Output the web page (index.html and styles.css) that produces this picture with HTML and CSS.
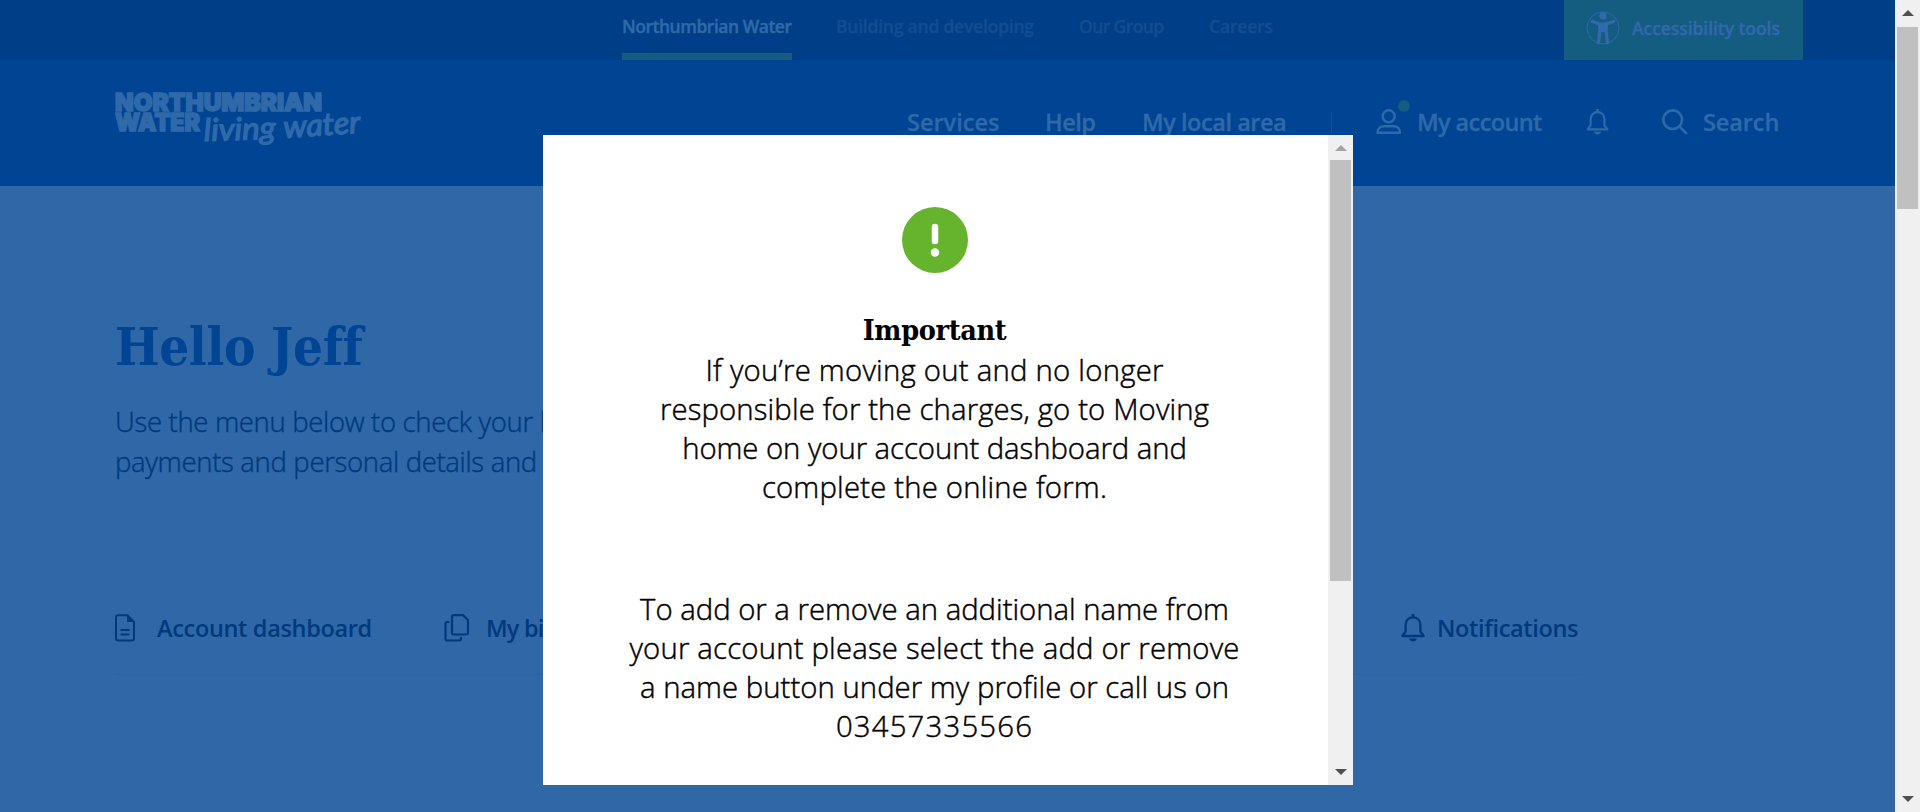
FILE: index.html
```
<!DOCTYPE html>
<html lang="en">
<head>
<meta charset="utf-8">
<title>My account | Northumbrian Water</title>
<link rel="stylesheet" href="styles.css">
</head>
<body>
<div class="window">
  <div class="page">
    <div class="topbar">
      <nav class="sites">
        <a class="site active s1">Northumbrian Water</a>
        <a class="site s2">Building and developing</a>
        <a class="site s3">Our Group</a>
        <a class="site s4">Careers</a>
      </nav>
      <a class="access">
        <svg width="34" height="34" viewBox="0 0 34 34"><circle cx="17" cy="17" r="16" fill="none" stroke="currentColor"/><circle cx="17" cy="5" r="3.6" fill="currentColor"/><path d="M6.200 10.500 13.500 13 14 19 12.500 32M27.800 10.500 20.500 13 20 19 21.500 32" fill="none" stroke="currentColor" stroke-width="3.200" stroke-linecap="round"/><path d="M12 11.500h10l-1.500 9.500h-7z" fill="currentColor"/></svg>
        <span>Accessibility tools</span>
      </a>
    </div>
    <header class="header">
      <svg class="logo" width="250" height="76" viewBox="0 -6 250 76">
        <text class="brand" x="0" y="21" textLength="207" lengthAdjust="spacingAndGlyphs">NORTHUMBRIAN</text>
        <text class="brand" x="0" y="40.500" textLength="85" lengthAdjust="spacingAndGlyphs">WATER</text>
        <text class="script" x="89" y="51" textLength="72" lengthAdjust="spacingAndGlyphs" transform="rotate(-2 89 51)">living</text>
        <text class="script" x="169" y="48" textLength="77" lengthAdjust="spacingAndGlyphs" transform="rotate(-4 169 48)">water</text>
      </svg>
      <nav class="mainnav">
        <a class="n1">Services</a><a class="n2">Help</a><a class="n3">My local area</a>
        <i class="divider"></i>
        <span class="person">
          <svg width="26" height="26" viewBox="0 0 26 26" fill="none" stroke="currentColor" stroke-width="2.500"><circle cx="12.700" cy="7.300" r="6"/><path d="M1.500 23.800C1.500 19 5 17.200 8 17.200h9.500c3 0 6.500 1.800 6.500 6.600z" stroke-linejoin="round"/></svg>
          <b class="dot"></b>
        </span>
        <a class="n4">My account</a>
        <svg class="bell" width="23" height="26" viewBox="0 0 24 28"><use href="#bell"/></svg>
        <svg width="26" height="26" viewBox="0 0 26 26" fill="none" stroke="currentColor" stroke-width="2.600"><circle cx="10.700" cy="10.700" r="9.300"/><path d="m17.300 17.300 7.500 7.500"/></svg>
        <a class="n5">Search</a>
      </nav>
    </header>
    <main class="main">
      <h1>Hello Jeff</h1>
      <p class="intro">Use the menu below to check your bills,<br>payments and personal details and</p>
      <div class="tabs">
        <svg width="20" height="28" viewBox="0 0 20 28"><path d="M3 1.200h9.500L19 8v16.500a2 2 0 0 1-2 2H3a2 2 0 0 1-2-2V3.200a2 2 0 0 1 2-2zM5.500 16h9M5.500 20.500h9" fill="none" stroke="currentColor" stroke-width="2"/><path d="M12 1v7h7z" fill="currentColor"/></svg>
        <a class="t1">Account dashboard</a>
        <svg width="25" height="28" viewBox="0 0 25 28" fill="none" stroke="currentColor" stroke-width="2.200"><path d="M10 1.200h9L24 6v12.500a2 2 0 0 1-2 2H10a2 2 0 0 1-2-2V3.200a2 2 0 0 1 2-2zM5.500 8H3.500a2 2 0 0 0-2 2v14.500a2 2 0 0 0 2 2H15a2 2 0 0 0 2-2V23"/></svg>
        <a class="t2">My bills</a>
        <svg class="bell2" width="24" height="28" viewBox="0 0 24 28"><g id="bell"><path d="M1.300 22 4.600 17.500V11C4.600 6 8 3.300 12 3.300S19.400 6 19.400 11v6.500L22.700 22z" fill="none" stroke="currentColor" stroke-width="2.300" stroke-linejoin="round"/><path d="M10.600 0h2.800v3.500h-2.800zM8 24.500h8c-.8 2-2.200 3-4 3s-3.200-1-4-3z" fill="currentColor"/></g></svg>
        <a class="t3">Notifications</a>
      </div>
    </main>
  </div>
  <div class="scrollbar">
    <i class="up dark"></i><div class="thumb page-thumb"></div><i class="down"></i>
  </div>
  <section class="modal">
    <div class="modal-body">
      <svg class="alert" width="66" height="66" viewBox="0 0 66 66"><circle cx="33" cy="33" r="33" fill="#66b32e"/><path d="M33 20v14" stroke="#fff" stroke-width="6.500" stroke-linecap="round"/><circle cx="33" cy="45.500" r="4.200" fill="#fff"/></svg>
      <h2>Important</h2>
      <p class="copy"><span class="c1">If you’re moving out and no longer</span><span class="c2">responsible for the charges, go to Moving</span><span class="c3">home on your account dashboard and</span><span class="c4">complete the online form.</span></p>
      <p class="copy second"><span class="c5">To add or a remove an additional name from</span><span class="c6">your account please select the add or remove</span><span class="c7">a name button under my profile or call us on</span><span class="c8">03457335566</span></p>
    </div>
    <div class="scrollbar">
      <i class="up"></i><div class="thumb"></div><i class="down"></i>
    </div>
  </section>
</div>
</body>
</html>
```
FILE: styles.css
```
* { box-sizing: border-box; }
body { margin: 0; overflow: hidden; font-family: "Open Sans", sans-serif; }
h1, h2, p { margin: 0; }
svg { display: block; flex: none; }
.window { position: relative; display: flex; width: 1920px; height: 812px; overflow: hidden; }
.page { width: 1895px; background: #2f67a7; }

.topbar { display: flex; height: 60px; padding-left: 622px; background: #003e87; }
.sites { display: flex; width: 942px; }
.site { height: 60px; font-size: 17.5px; font-weight: 600; line-height: 53px; white-space: nowrap; color: #134c92; -webkit-text-stroke: .4px; }
.site.active { color: #3069a9; border-bottom: 7px solid #145c80; }
.s1 { width: 170px; margin-right: 44px; letter-spacing: -.48px; }
.s2 { width: 198px; margin-right: 45px; letter-spacing: -.22px; }
.s3 { width: 85px; margin-right: 45px; letter-spacing: -.6px; }
.s4 { letter-spacing: -.17px; }
.access { display: flex; width: 239px; height: 60px; padding: 11px 0 0 22px; color: #3069ad; background: #145c80; font-size: 17.5px; font-weight: 600; }
.access span { margin: -11px 0 0 12px; line-height: 57px; white-space: nowrap; letter-spacing: -.06px; -webkit-text-stroke: .4px; }

.header { display: flex; height: 126px; padding-left: 115px; background: #004494; color: #3069a9; }
.logo { margin-top: 24px; }
.brand { font: 900 24px Inter, sans-serif; fill: #3069a9; stroke: #3069a9; stroke-width: 1.5px; }
.script { font: italic 400 31px Lato, sans-serif; fill: #3069a9; stroke: #3069a9; stroke-width: 1.3px; }
.mainnav { display: flex; align-items: center; height: 124px; margin-left: 542px; font-size: 23.5px; font-weight: 600; line-height: 124px; white-space: nowrap; -webkit-text-stroke: .3px; }
.n1 { width: 92px; margin-right: 46px; }
.n2 { width: 51px; margin-right: 46px; letter-spacing: -.5px; }
.n3 { width: 144px; margin-right: 45px; letter-spacing: -.45px; }
.divider { width: 1px; height: 20px; margin-right: 44px; background: #11529c; }
.person { position: relative; width: 26px; margin-right: 15px; }
.dot { position: absolute; left: 22px; top: -9px; width: 12px; height: 12px; border-radius: 50%; background: #145c80; }
.n4 { width: 124px; margin-right: 45px; letter-spacing: -.6px; }
.bell { margin-right: 53px; }
.n5 { margin-left: 15px; letter-spacing: -.1px; }

.main { padding: 131px 0 0 115px; color: #003a7d; }
h1 { font: bold 52.5px/60px "DejaVu Serif Condensed", "DejaVu Serif", serif; font-stretch: condensed; letter-spacing: -.4px; color: #004494; }
.intro { width: 560px; margin-top: 25px; font-size: 27.5px; font-weight: 300; line-height: 40px; letter-spacing: -.33px; white-space: nowrap; -webkit-text-stroke: .4px #003a7d; }
.tabs { display: flex; align-items: center; width: 1464px; height: 65px; margin-top: 128px; padding-bottom: 28px; border-bottom: 1px solid #2b64a5; font-size: 23.5px; font-weight: 600; line-height: 36px; white-space: nowrap; }
.t1 { width: 214px; margin: 0 73px 0 22px; letter-spacing: -.33px; }
.t2 { width: 90px; margin: 0 825px 0 17px; letter-spacing: -.8px; }
.t3 { margin-left: 12px; letter-spacing: -.33px; }

.scrollbar { display: flex; flex-direction: column; align-items: center; width: 25px; background: #f0f0f0; }
.thumb { width: 21px; height: 421px; margin: 9px 0 auto; background: #c0c0c0; }
.page-thumb { height: 182px; margin-top: 11px; }
.up, .down { border: 6px solid transparent; border-top-width: 0; border-bottom-color: #a3a3a3; margin-top: 10px; }
.up.dark { border-bottom-color: #505050; }
.down { border-top: 6px solid #505050; border-bottom-width: 0; margin: 0 0 10px; }

.modal { position: absolute; left: 543px; top: 135px; display: flex; width: 810px; height: 650px; background: #fff; }
.modal-body { width: 785px; padding: 72px 2px 0 0; text-align: center; color: #000; }
.alert { margin: 0 auto; }
h2 { margin-top: 38px; font: bold 28.5px/38px "DejaVu Serif Condensed", "DejaVu Serif", serif; font-stretch: condensed; letter-spacing: -.33px; }
.copy { margin-top: 2px; font-size: 29.3px; font-weight: 300; line-height: 39px; -webkit-text-stroke: .45px #000; }
.copy span { display: block; white-space: nowrap; }
.copy.second { margin-top: 83px; }
.c1 { letter-spacing: .243px; }
.c2 { letter-spacing: .136px; }
.c3 { letter-spacing: -.05px; }
.c4 { letter-spacing: .192px; }
.c6 { letter-spacing: .2px; }
.c7 { letter-spacing: .04px; }
.c8 { letter-spacing: 1.2px; }
```
